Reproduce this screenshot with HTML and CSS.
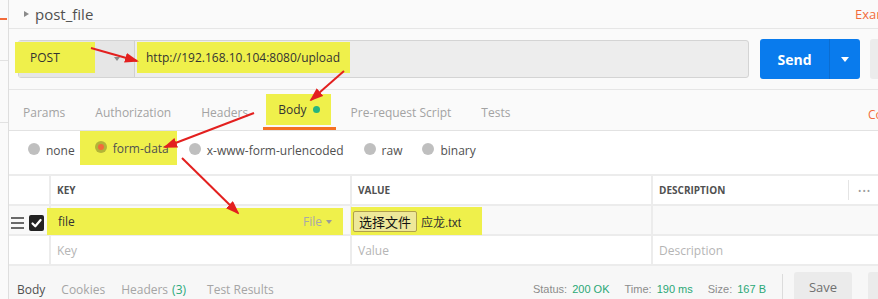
FILE: index.html
```html
<!DOCTYPE html>
<html lang="zh-CN">
<head>
    <meta charset="UTF-8">
    <meta name="viewport" content="width=device-width, initial-scale=1.0">
    <title>post_file</title>

    <link rel="stylesheet" href="styles.css">
</head>
<body>

    <div class="app">

        <!-- left sidebar edge -->
        <aside class="sidebar">
            <span class="sidebar-tab"></span>
            <span class="sidebar-rule first"></span>
            <span class="sidebar-rule second"></span>
        </aside>

        <main class="builder">

            <div class="title-bar">
                <span class="title-caret"></span>
                <span class="title-name">post_file</span>
                <span class="title-link">Examples (0)</span>
            </div>

            <!-- method + url + send -->
            <div class="request-bar">
                <div class="url-group">
                    <div class="method">
                        <span class="method-name mark">POST</span>
                        <span class="method-caret"></span>
                    </div>
                    <div class="url-field">
                        <span class="url-text mark">http://192.168.10.104:8080/upload</span>
                    </div>
                </div>
                <div class="send-btn">
                    <span class="send-label">Send</span>
                    <span class="send-more"><span class="send-caret"></span></span>
                </div>
                <div class="save-stub"></div>
            </div>

            <nav class="tabs">
                <span class="tab first">Params</span>
                <span class="tab">Authorization</span>
                <span class="tab">Headers</span>
                <span class="tab active"><span class="tab-mark mark">Body<span class="dot"></span></span></span>
                <span class="tab">Pre-request Script</span>
                <span class="tab">Tests</span>
                <span class="tab-link">Cookies</span>
            </nav>

            <div class="body-types">
                <span class="option"><span class="radio"></span>none</span>
                <span class="option mark"><span class="radio on"></span>form-data</span>
                <span class="option"><span class="radio"></span>x-www-form-urlencoded</span>
                <span class="option"><span class="radio"></span>raw</span>
                <span class="option"><span class="radio"></span>binary</span>
            </div>

            <!-- key / value table -->
            <div class="kv">
                <div class="kv-row kv-head">
                    <span class="kv-gutter"></span>
                    <span class="kv-cell">KEY</span>
                    <span class="kv-cell">VALUE</span>
                    <span class="kv-cell">DESCRIPTION<span class="kv-more">•••</span></span>
                </div>
                <div class="kv-row filled">
                    <span class="kv-gutter">
                        <svg width="13" height="12" viewBox="0 0 13 12">
                            <rect x="0" y="0" width="13" height="2" fill="#6a6a6a"/>
                            <rect x="0" y="5" width="13" height="2" fill="#6a6a6a"/>
                            <rect x="0" y="10" width="13" height="2" fill="#6a6a6a"/>
                        </svg>
                        <svg width="15" height="16" viewBox="0 0 15 16">
                            <rect x="0" y="0" width="15" height="16" rx="2" fill="#222"/>
                            <path d="M3.5 8.5 L6.3 11.3 L11.6 5" fill="none" stroke="#fff" stroke-width="2.2" stroke-linecap="round" stroke-linejoin="round"/>
                        </svg>
                    </span>
                    <span class="kv-cell">
                        <span class="key-mark mark">
                            <span>file</span>
                            <span class="type-select">File<span class="type-caret"></span></span>
                        </span>
                    </span>
                    <span class="kv-cell">
                        <span class="value-mark mark">
                            <span class="file-btn">选择文件</span>
                            <span class="file-name">应龙.txt</span>
                        </span>
                    </span>
                    <span class="kv-cell"></span>
                </div>
                <div class="kv-row">
                    <span class="kv-gutter"></span>
                    <span class="kv-cell placeholder">Key</span>
                    <span class="kv-cell placeholder">Value</span>
                    <span class="kv-cell placeholder">Description</span>
                </div>
            </div>

            <!-- response bar -->
            <div class="response-bar">
                <span class="res-tab current">Body</span>
                <span class="res-tab">Cookies</span>
                <span class="res-tab">Headers<span class="res-count">(3)</span></span>
                <span class="res-tab results">Test Results</span>

                <div class="status">
                    <span>Status: <b>200 OK</b></span>
                    <span>Time: <b>190 ms</b></span>
                    <span>Size: <b>167 B</b></span>
                </div>
                <span class="res-sep"></span>
                <span class="save-btn">Save</span>
                <span class="res-stub"></span>
            </div>

        </main>

        <!-- red annotation arrows drawn over the screenshot -->
        <svg class="annotations" width="878" height="299" viewBox="0 0 878 299">
            <defs>
                <marker id="head" markerWidth="14" markerHeight="10" refX="12" refY="5" orient="auto" markerUnits="userSpaceOnUse">
                    <path d="M0 0 L14 5 L0 10 Z" fill="#e3201f"/>
                </marker>
            </defs>
            <line x1="91" y1="48" x2="137" y2="61" stroke="#e3201f" stroke-width="2" marker-end="url(#head)"/>
            <line x1="344" y1="71" x2="311" y2="100" stroke="#e3201f" stroke-width="2" marker-end="url(#head)"/>
            <line x1="254" y1="113" x2="165" y2="147" stroke="#e3201f" stroke-width="2" marker-end="url(#head)"/>
            <line x1="182" y1="158" x2="238" y2="213" stroke="#e3201f" stroke-width="2" marker-end="url(#head)"/>
        </svg>

    </div>

</body>
</html>
```

FILE: styles.css
```css
body {
    margin: 0;
    width: 878px;
    height: 299px;
    overflow: hidden;
    background: #fafafa;
    font-family: "Open Sans", sans-serif;
    color: #505050;
}

.app {
    position: relative;
    display: flex;
    height: 299px;
}

/* annotation highlight */
.mark {
    background: #eff04b;
}

/* sidebar */
.sidebar {
    width: 8px;
    flex: none;
    border-right: 1px solid #dedede;
    display: flex;
    flex-direction: column;
}

.sidebar-tab {
    width: 7px;
    height: 2px;
    margin-top: 18px;
    background: #f26b3a;
}

.sidebar-rule {
    height: 1px;
    background: #e2e2e2;
}

.sidebar-rule.first {
    margin-top: 40px;
}

.sidebar-rule.second {
    margin-top: 61px;
}

.builder {
    width: 869px;
    flex: none;
    display: flex;
    flex-direction: column;
}

.builder > * {
    flex: none;
}

/* title */
.title-bar {
    height: 28px;
    border-bottom: 1px solid #e6e6e6;
    display: flex;
    align-items: center;
    padding-left: 15px;
}

.title-caret {
    width: 0;
    height: 0;
    border-left: 5px solid #8a8a8a;
    border-top: 3.5px solid transparent;
    border-bottom: 3.5px solid transparent;
    margin-right: 6px;
}

.title-name {
    font-size: 15px;
    color: #505050;
}

.title-link {
    margin-left: auto;
    width: 23px;
    flex: none;
    white-space: nowrap;
    font-size: 13px;
    color: #f26b3a;
}

/* request bar */
.request-bar {
    height: 60px;
    border-bottom: 1px solid #e6e6e6;
    display: flex;
    align-items: center;
    padding-left: 9px;
}

.url-group {
    width: 731px;
    height: 38px;
    flex: none;
    box-sizing: border-box;
    border: 1px solid #d4d4d4;
    border-radius: 3px;
    background: #ededed;
    display: flex;
}

.method {
    width: 116px;
    box-sizing: border-box;
    border-right: 1px solid #d0d0d0;
    background: #e6e6e6;
    display: flex;
    align-items: center;
}

.method-name {
    width: 80px;
    height: 31px;
    margin-left: -4px;
    margin-bottom: 3px;
    padding-left: 15px;
    box-sizing: border-box;
    display: flex;
    align-items: center;
    font-size: 12px;
    color: #333;
}

.method-caret {
    width: 0;
    height: 0;
    margin-left: 19px;
    border-top: 4px solid #8a8a8a;
    border-left: 3.5px solid transparent;
    border-right: 3.5px solid transparent;
}

.url-field {
    flex: 1;
    display: flex;
    align-items: center;
}

.url-text {
    height: 31px;
    margin-left: 2px;
    margin-bottom: 3px;
    padding: 0 10px 0 9px;
    box-sizing: border-box;
    display: flex;
    align-items: center;
    font-size: 12px;
    color: #333;
}

.send-btn {
    width: 100px;
    height: 40px;
    flex: none;
    margin-left: 11px;
    border-radius: 3px;
    background: #097bed;
    color: #fff;
    display: flex;
}

.send-label {
    width: 69px;
    display: flex;
    align-items: center;
    justify-content: center;
    font-size: 14px;
    font-weight: 700;
}

.send-more {
    flex: 1;
    border-left: 1px solid #0a6dd2;
    display: flex;
    align-items: center;
    justify-content: center;
}

.send-caret {
    width: 0;
    height: 0;
    border-top: 5px solid #fff;
    border-left: 4px solid transparent;
    border-right: 4px solid transparent;
}

.save-stub {
    width: 20px;
    height: 40px;
    flex: none;
    margin-left: 10px;
    border-radius: 3px 0 0 3px;
    background: #ececec;
}

/* request tabs */
.tabs {
    height: 40px;
    border-bottom: 1px solid #e2e2e2;
    display: flex;
}

.tab {
    height: 40px;
    box-sizing: border-box;
    padding: 8px 15px 0;
    border-bottom: 3px solid transparent;
    display: flex;
    align-items: center;
    font-size: 12px;
    color: #a3a3a3;
    white-space: nowrap;
}

.tab.first {
    padding-left: 14px;
}

.tab.active {
    padding: 8px 5px 0 3px;
    border-bottom-color: #f47023;
    color: #333;
}

.tab-mark {
    height: 31px;
    margin-bottom: 6px;
    padding: 0 11px 0 12px;
    display: flex;
    align-items: center;
}

.dot {
    width: 7px;
    height: 7px;
    margin-left: 6px;
    border-radius: 50%;
    background: #26b47f;
}

.tab-link {
    margin-left: auto;
    width: 10px;
    flex: none;
    padding-top: 8px;
    display: flex;
    align-items: center;
    white-space: nowrap;
    font-size: 12px;
    color: #f26b3a;
}

/* body types */
.body-types {
    height: 38px;
    padding: 0 0 5px 19px;
    background: #fff;
    display: flex;
    align-items: center;
}

.option {
    margin-right: 20px;
    display: flex;
    align-items: center;
    font-size: 12px;
    color: #505050;
}

.option.mark {
    height: 34px;
    margin: 0 12px 4px -15px;
    padding: 0 8px 0 15px;
}

.radio {
    width: 12px;
    height: 12px;
    margin: -3px 6px 0 0;
    flex: none;
    border-radius: 50%;
    background: rgba(0, 0, 0, 0.25);
    display: flex;
    align-items: center;
    justify-content: center;
}

.radio.on::after {
    content: "";
    width: 6px;
    height: 6px;
    border-radius: 50%;
    background: #f26b3a;
}

/* key value table */
.kv {
    background: #fff;
    border-top: 2px solid #ececec;
}

.kv-row {
    height: 28px;
    border-bottom: 2px solid #ececec;
    display: grid;
    grid-template-columns: 40px 301px 301px 1fr;
    font-size: 12px;
}

.kv-row.filled {
    background: #f9f9f9;
}

.kv-head {
    font-size: 10px;
    font-weight: 700;
    color: #505050;
}

.kv-gutter {
    padding: 4px 0 0 2px;
    display: flex;
    align-items: center;
    gap: 5px;
}

.kv-cell {
    border-left: 2px solid #ececec;
    padding-left: 6px;
    display: flex;
    align-items: center;
    white-space: nowrap;
}

.kv-more {
    width: 20px;
    height: 20px;
    margin-left: auto;
    padding-left: 9px;
    border-left: 1px solid #e4e4e4;
    display: flex;
    align-items: center;
    font-size: 9px;
    font-weight: 400;
    letter-spacing: 1px;
    color: #9a9a9a;
}

.placeholder {
    color: #b5b5b5;
}

.key-mark {
    width: 296px;
    height: 27px;
    margin: 2px 0 0 -10px;
    padding: 0 11px;
    box-sizing: border-box;
    align-self: flex-start;
    display: flex;
    align-items: center;
    justify-content: space-between;
    color: #333;
}

.type-select {
    display: flex;
    align-items: center;
    gap: 4px;
    color: #a8a8a8;
}

.type-caret {
    width: 0;
    height: 0;
    border-top: 4px solid #9a9a9a;
    border-left: 3.5px solid transparent;
    border-right: 3.5px solid transparent;
}

.value-mark {
    height: 28px;
    margin: 1px 0 0 -7px;
    padding: 0 21px 0 2px;
    align-self: flex-start;
    display: flex;
    align-items: center;
}

.file-btn {
    height: 19px;
    padding: 0 5px;
    border: 1px solid #b0a04c;
    border-radius: 2px;
    background: #eee89a;
    display: flex;
    align-items: center;
    font-family: "Noto Sans CJK SC", sans-serif;
    font-size: 13px;
    color: #111;
}

.file-name {
    margin-left: 4px;
    font-family: "Liberation Sans", "Noto Sans CJK SC", sans-serif;
    font-size: 12px;
    color: #333;
}

/* response bar */
.response-bar {
    height: 34px;
    padding: 6px 0 0 8px;
    background: #f7f7f7;
    display: flex;
    align-items: center;
}

.res-tab {
    margin-right: 16px;
    flex: none;
    font-size: 12px;
    color: #a5a5a5;
}

.res-tab.current {
    color: #505050;
}

.res-tab.results {
    margin-left: 5px;
}

.res-count {
    margin-left: 4px;
    color: #2ba97a;
}

.status {
    margin-left: auto;
    display: flex;
    gap: 15px;
    font-family: "Liberation Sans", Arial, sans-serif;
    font-size: 11px;
    color: #8c8c8c;
    white-space: nowrap;
}

.status b {
    margin-left: 2px;
    font-weight: 400;
    color: #2aa876;
}

.res-sep {
    width: 1px;
    height: 30px;
    margin: 0 11px 0 16px;
    flex: none;
    background: #dcdcdc;
}

.save-btn {
    width: 58px;
    height: 30px;
    padding-bottom: 4px;
    margin-right: 16px;
    flex: none;
    border-radius: 3px;
    background: #ebebeb;
    display: flex;
    align-items: center;
    justify-content: center;
    font-size: 13px;
    color: #707070;
}

.res-stub {
    width: 10px;
    height: 34px;
    flex: none;
    border-radius: 3px 0 0 3px;
    background: #ebebeb;
}

.annotations {
    position: absolute;
    left: 0;
    top: 0;
    pointer-events: none;
}
```
